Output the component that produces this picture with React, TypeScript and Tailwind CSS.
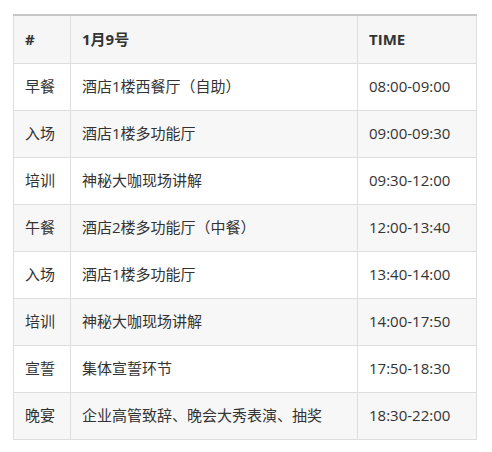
const rows = [
  ["早餐", "酒店1楼西餐厅（自助）", "08:00-09:00"],
  ["入场", "酒店1楼多功能厅", "09:00-09:30"],
  ["培训", "神秘大咖现场讲解", "09:30-12:00"],
  ["午餐", "酒店2楼多功能厅（中餐）", "12:00-13:40"],
  ["入场", "酒店1楼多功能厅", "13:40-14:00"],
  ["培训", "神秘大咖现场讲解", "14:00-17:50"],
  ["宣誓", "集体宣誓环节", "17:50-18:30"],
  ["晚宴", "企业高管致辞、晚会大秀表演、抽奖", "18:30-22:00"],
];

export default function App() {
  return (
    <div
      className="w-[492px] h-[452px] bg-white pt-[14px] pl-[13px] text-[15px] text-[#333]"
      style={{ fontFamily: '"Open Sans", "Noto Sans CJK SC", sans-serif' }}
    >
      <table className="w-[463px] border-collapse table-fixed">
        <colgroup>
          <col className="w-[57px]" />
          <col className="w-[287px]" />
          <col className="w-[119px]" />
        </colgroup>
        <thead>
          <tr className="h-[48px] bg-[#f6f6f6]">
            <th className="border border-[#dedede] border-t-[#c6c6c6] border-t-2 px-[11px] text-left font-bold">#</th>
            <th className="border border-[#dedede] border-t-[#c6c6c6] border-t-2 px-[11px] text-left font-bold">1月9号</th>
            <th className="border border-[#dedede] border-t-[#c6c6c6] border-t-2 px-[11px] text-left font-bold">TIME</th>
          </tr>
        </thead>
        <tbody>
          {rows.map((r, i) => (
            <tr key={i} className={i % 2 === 1 ? "h-[47px] bg-[#f7f7f7]" : "h-[47px] bg-white"}>
              {r.map((c, j) => (
                <td key={j} className="border border-[#dedede] px-[11px] whitespace-nowrap">
                  {c}
                </td>
              ))}
            </tr>
          ))}
        </tbody>
      </table>
    </div>
  );
}
